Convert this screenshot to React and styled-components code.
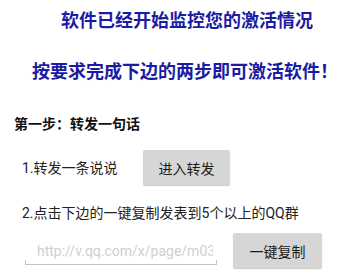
import React from "react";
import styled, { createGlobalStyle } from "styled-components";

const Global = createGlobalStyle`
  html, body { margin: 0; padding: 0; background: #ffffff; }
  body { font-family: Roboto, "Noto Sans CJK SC", sans-serif; }
`;

const Page = styled.div`
  width: 346px;
  height: 279px;
  box-sizing: border-box;
  padding-top: 9px;
  overflow: hidden;
  background: #ffffff;
`;

const Title = styled.div`
  font-family: Roboto, "Noto Sans CJK SC", sans-serif;
  font-size: 18px;
  font-weight: 700;
  line-height: 24px;
  color: #1b1ba3;
  white-space: nowrap;
  padding-left: ${(p) => p.$left}px;
  margin-top: ${(p) => p.$top || 0}px;
`;

const StepHeading = styled.div`
  font-family: Roboto, "Noto Sans CJK SC", sans-serif;
  font-size: 14px;
  font-weight: 700;
  line-height: 20px;
  color: #111;
  padding-left: 14px;
  margin-top: 30px;
`;

const Row = styled.div`
  display: flex;
  align-items: ${(p) => p.$align || "center"};
  padding-left: ${(p) => p.$left}px;
  margin-top: ${(p) => p.$top}px;
`;

const Label = styled.div`
  font-family: Roboto, "Noto Sans CJK SC", sans-serif;
  font-size: 14px;
  line-height: 20px;
  color: #222;
  width: ${(p) => (p.$width ? `${p.$width}px` : "auto")};
  white-space: nowrap;
`;

const Instruction = styled(Label)`
  padding-left: 22px;
  margin-top: 18px;
`;

const Button = styled.button`
  height: 35px;
  width: ${(p) => p.$width}px;
  border: none;
  border-radius: 2px;
  background: #d6d6d6;
  box-shadow: 0 1px 1px rgba(0, 0, 0, 0.22);
  font-family: Roboto, "Noto Sans CJK SC", sans-serif;
  font-size: 14px;
  color: #1a1a1a;
  padding: 0;
  cursor: pointer;
`;

const Field = styled.div`
  position: relative;
  width: 192px;
  height: 31px;
  margin-right: 16px;
  border-bottom: 1px solid #c4c4c4;
  &::before,
  &::after {
    content: "";
    position: absolute;
    bottom: 0;
    width: 1px;
    height: 4px;
    background: #c4c4c4;
  }
  &::before { left: 0; }
  &::after { right: 0; }
`;

const Input = styled.input`
  width: 100%;
  height: 100%;
  box-sizing: border-box;
  border: none;
  outline: none;
  background: transparent;
  padding: 4px 4px 0 12px;
  font-family: Roboto, "Noto Sans CJK SC", sans-serif;
  font-size: 14px;
  color: #333;
  &::placeholder { color: #cfcfcf; }
`;

export default function App() {
  return (
    <>
      <Global />
      <Page>
        <Title $left={61}>软件已经开始监控您的激活情况</Title>
        <Title $left={32} $top={27}>按要求完成下边的两步即可激活软件！</Title>
        <StepHeading>第一步：转发一句话</StepHeading>
        <Row $left={22} $top={16}>
          <Label $width={121}>1.转发一条说说</Label>
          <Button $width={87}>进入转发</Button>
        </Row>
        <Instruction>2.点击下边的一键复制发表到5个以上的QQ群</Instruction>
        <Row $left={25} $top={10} $align="flex-start">
          <Field>
            <Input placeholder="http://v.qq.com/x/page/m0340abcd.html" readOnly />
          </Field>
          <Button $width={89}>一键复制</Button>
        </Row>
      </Page>
    </>
  );
}
